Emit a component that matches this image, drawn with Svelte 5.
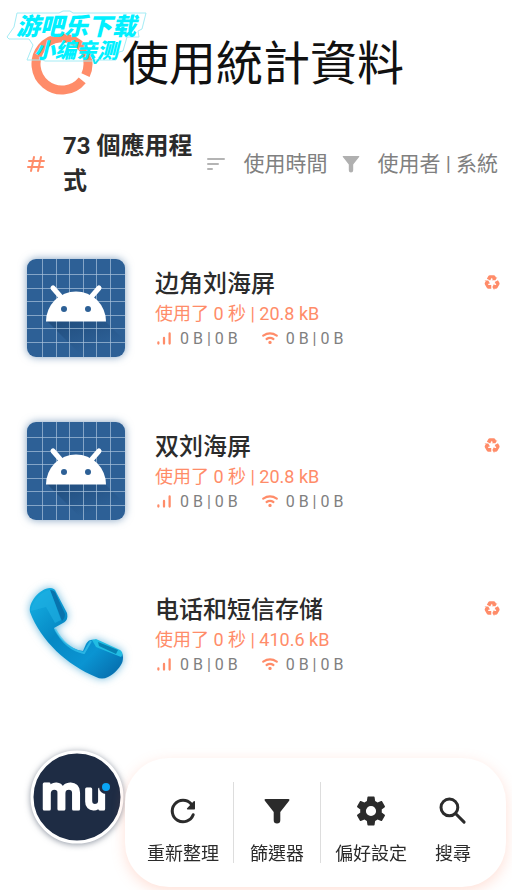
<script lang="ts">
	interface App {
		id: number;
		icon: 'android' | 'phone' | 'mu';
		name?: string;
		size?: string;
	}

	const apps: App[] = [
		{ id: 1, icon: 'android', name: '边角刘海屏', size: '20.8 kB' },
		{ id: 2, icon: 'android', name: '双刘海屏', size: '20.8 kB' },
		{ id: 3, icon: 'phone', name: '电话和短信存储', size: '410.6 kB' },
		{ id: 4, icon: 'mu' }
	];

	const gridLines = [15, 29, 42, 56, 69, 83];
</script>

{#snippet funnel()}
	<svg viewBox="0 0 24 24" fill="currentColor">
		<path d="M4.4 4h15.2c.7 0 .9.6.5 1.1L14.2 12.6v5.6a2.2 2.2 0 0 1-4.4 0v-5.6L3.9 5.1C3.5 4.6 3.7 4 4.4 4z" />
	</svg>
{/snippet}

{#snippet appIcon(icon: string)}
	{#if icon === 'android'}
		<svg class="app-icon android" viewBox="0 0 98 98">
			<defs>
				<linearGradient id="shade" x1="0" y1="0" x2="0.7" y2="1">
					<stop offset="0" stop-color="#173f6b" stop-opacity="0.6" />
					<stop offset="0.8" stop-color="#173f6b" stop-opacity="0" />
				</linearGradient>
			</defs>
			<rect width="98" height="98" rx="9" fill="#2d6096" />
			<path d="M20 62h58l20 20v16H56z" fill="url(#shade)" />
			{#each gridLines as n}
				<path d="M{n}.5 0v98M0 {n}.5h98" stroke="#a9c3dc" stroke-opacity="0.7" />
			{/each}
			<path d="M26 29l7 8M72 29l-7 8" stroke="#fff" stroke-width="5" stroke-linecap="round" />
			<path d="M19 62.5a30 30 0 0 1 60 0z" fill="#fff" />
			<circle cx="37" cy="50" r="3" fill="#2d6096" />
			<circle cx="61" cy="50" r="3" fill="#2d6096" />
		</svg>
	{:else if icon === 'phone'}
		<svg class="app-icon phone" viewBox="0 0 98 98">
			<defs>
				<linearGradient id="body" x1="0" y1="0" x2="1" y2="1">
					<stop offset="0" stop-color="#16b4e6" />
					<stop offset="0.4" stop-color="#0688c4" />
					<stop offset="0.7" stop-color="#0a94d2" />
					<stop offset="1" stop-color="#0566a6" />
				</linearGradient>
			</defs>
			<path
				d="M8 12C12 7 18 3 23 3c3 0 5 1 6 4l11 21c1 5 0 8-4 10l-9 5c4 8 11 17 24 22l5 1 3-7c2-4 5-5 9-4l25 11c3 2 4 7 2 12-3 6-9 12-14 14-4 2-8 2-12 0C40 80 14 56 3 27c-1-6 2-11 5-15z"
				fill="url(#body)"
			/>
			<path d="M23 5c3 0 5 1 6 4l9 20c0 3-1 5-3 7z" fill="#0873ad" />
			<path d="M23 5l11 30-6 3-9-16L4 26C5 17 14 6 23 5z" fill="#20b0e2" opacity="0.6" />
			<path d="M65 55l4-1 24 11c3 2 3 5 1 7L69 62z" fill="#21bde3" />
			<path d="M71 57l20 8-2 4-17-8z" fill="#0782b3" />
			<path d="M28 44c8 15 19 22 29 24l7-12" fill="none" stroke="#37c4ee" stroke-opacity="0.7" stroke-width="2" stroke-linejoin="round" />
		</svg>
	{:else}
		<svg class="app-icon mu" viewBox="0 0 98 98">
			<circle cx="50" cy="49" r="45" fill="#1e2c44" stroke="#fff" stroke-width="3" />
			<g class="mu-text">
				<text x="14" y="61" font-size="46">m</text>
				<text x="57" y="61" font-size="37">u</text>
			</g>
			<circle cx="79" cy="39" r="7" fill="#1e2c44" />
			<circle cx="79" cy="39" r="4" fill="#0aa5f5" />
		</svg>
	{/if}
{/snippet}

<div class="watermark">
	<svg viewBox="0 0 150 64" fill="none" stroke="#a4ecf5">
		<path d="M17 13h42l4-2h7l3 2h73l-4 16-4 2 1 6h-12l-4 14-4 1-3 8H94l-2 1H45l-2-1H27l6-15-4-6H9l-2-2 7-10z" />
		<path d="M92 54l3 10 4-5" stroke="#12e6f5" stroke-width="2" />
	</svg>
	<span class="line-1">游吧乐下载</span>
	<span class="line-2">小编亲测</span>
</div>

<header>
	<svg class="logo" viewBox="0 0 62 62">
		<circle
			cx="31"
			cy="31"
			r="26"
			fill="none"
			stroke="#ff8c69"
			stroke-width="9"
			pathLength="360"
			stroke-dasharray="346 14"
			transform="rotate(39 31 31)"
		/>
	</svg>
	<h1>使用統計資料</h1>
</header>

<div class="summary">
	<svg class="hash" viewBox="0 0 18 18" fill="none" stroke="#ff8c69" stroke-width="2" stroke-linecap="round">
		<path d="M7 2L4 16M14 2l-3 14M2 6h15M1 12h15" />
	</svg>
	<strong>73 個應用程式</strong>
	<button class="chip">
		<svg class="sort" viewBox="0 0 20 14" fill="none" stroke="#b4b4b4" stroke-width="2" stroke-linecap="round">
			<path d="M2 2h16M2 7h10M2 12h4" />
		</svg>
		使用時間
	</button>
	<button class="chip filter">
		{@render funnel()}
		使用者 | 系統
	</button>
</div>

<ul>
	{#each apps as app (app.id)}
		<li>
			{@render appIcon(app.icon)}
			{#if app.name}
				<div class="details">
					<h2>{app.name}</h2>
					<p class="usage">使用了 0 秒 | {app.size}</p>
					<p class="network">
						<svg viewBox="0 0 16 16" fill="none" stroke="#ff8c69" stroke-width="2" stroke-linecap="round">
							<path d="M3 12v-1M8 12V7M13 12V3" />
						</svg>
						<span>0 B | 0 B</span>
						<svg class="wifi" viewBox="0 0 16 16" fill="none" stroke="#ff8c69" stroke-width="2" stroke-linecap="round">
							<path d="M2 5q6-4 12 0M5 8q3-2 6 0" />
							<circle cx="8" cy="11" r="1" fill="#ff8c69" stroke-width="1" />
						</svg>
						<span>0 B | 0 B</span>
					</p>
				</div>
				<svg class="recycle" viewBox="0 0 24 24" fill="#ff8c69">
					<path
						d="M21.82 15.42l-2.5 4.33c-.49.86-1.4 1.31-2.32 1.25h-2v2l-2.5-4.5L15 14v2h2.82l-2.22-3.85 4.33-2.5 1.8 3.12c.52.77.59 1.8.09 2.65M9.21 3.06h5c.98 0 1.83.57 2.24 1.39l1 1.74 1.73-1-2.64 4.41-5.15.09 1.73-1-1.41-2.45-2.21 3.85-4.34-2.5 1.8-3.12c.41-.83 1.26-1.41 2.25-1.41M5.05 19.76l-2.5-4.33c-.49-.85-.42-1.87.09-2.64l1-1.73-1.73-1 5.14.08 2.65 4.42-1.73-1L6.56 16H11v5H7.4c-.93.07-1.85-.39-2.35-1.24z"
					/>
				</svg>
			{/if}
		</li>
	{/each}
</ul>

<nav>
	<button>
		<svg viewBox="0 0 24 24" fill="none" stroke="currentColor" stroke-width="2" stroke-linecap="round">
			<path d="M18.8 14.5A7.2 7.2 0 1 1 17.5 7.3" />
			<path d="M19.5 5.8v4.7h-4.4z" fill="currentColor" stroke-width="1" stroke-linejoin="round" />
		</svg>
		重新整理
	</button>
	<button class="divided">
		{@render funnel()}
		篩選器
	</button>
	<button>
		<svg viewBox="0 0 24 24" fill="currentColor">
			<path
				d="M19.14 12.94c.04-.3.06-.61.06-.94 0-.32-.02-.64-.07-.94l2.03-1.58c.18-.14.23-.41.12-.61l-1.92-3.32c-.12-.22-.37-.29-.59-.22l-2.39.96c-.5-.38-1.03-.7-1.62-.94l-.36-2.54c-.04-.24-.24-.41-.48-.41h-3.84c-.24 0-.43.17-.47.41l-.36 2.54c-.59.24-1.13.57-1.62.94l-2.39-.96c-.22-.08-.47 0-.59.22L2.74 8.87c-.12.21-.08.47.12.61l2.03 1.58c-.05.3-.09.63-.09.94s.02.64.07.94l-2.03 1.58c-.18.14-.23.41-.12.61l1.92 3.32c.12.22.37.29.59.22l2.39-.96c.5.38 1.03.7 1.62.94l.36 2.54c.05.24.24.41.48.41h3.84c.24 0 .44-.17.47-.41l.36-2.54c.59-.24 1.13-.56 1.62-.94l2.39.96c.22.08.47 0 .59-.22l1.92-3.32c.12-.22.07-.47-.12-.61l-2.01-1.58zM12 15.4a3.4 3.4 0 1 1 0-6.8 3.4 3.4 0 0 1 0 6.8z"
			/>
		</svg>
		偏好設定
	</button>
	<button>
		<svg viewBox="0 0 24 24" fill="none" stroke="currentColor" stroke-width="2" stroke-linecap="round">
			<circle cx="9.6" cy="9.6" r="5.6" />
			<path d="M14 14l5.4 5.4" />
		</svg>
		搜尋
	</button>
</nav>

<style>
	:global(body) {
		margin: 0;
		background: #fff;
		color: #2b2b2b;
		font-family: Roboto, 'Noto Sans CJK TC', sans-serif;
	}

	h1,
	h2,
	p,
	ul {
		margin: 0;
		padding: 0;
	}

	svg {
		flex-shrink: 0;
	}

	button {
		border: none;
		background: none;
		padding: 0;
		font: inherit;
		color: inherit;
		white-space: nowrap;
	}

	.watermark {
		position: absolute;
		top: 0;
		left: 0;
		width: 150px;
		color: #00f0ff;
		font-family: 'Noto Sans CJK SC', sans-serif;
		font-weight: 900;
		font-style: italic;
		white-space: nowrap;
	}

	.watermark svg {
		display: block;
	}

	.line-1 {
		position: absolute;
		top: 13px;
		left: 16px;
		font-size: 24px;
		line-height: 24px;
	}

	.line-2 {
		position: absolute;
		top: 39px;
		left: 34px;
		font-size: 21px;
		line-height: 21px;
	}

	header {
		display: flex;
		align-items: center;
		gap: 29px;
		padding: 30px 31px 0;
	}

	.logo {
		width: 62px;
	}

	h1 {
		font-size: 47px;
		font-weight: 400;
		line-height: 68px;
		color: #111;
		white-space: nowrap;
	}

	.summary {
		display: flex;
		align-items: center;
		padding: 31px 14px 0 27px;
	}

	.hash {
		width: 18px;
		margin-right: 18px;
	}

	strong {
		flex: 1;
		font-size: 24px;
		line-height: 35px;
	}

	.chip {
		display: flex;
		align-items: center;
		gap: 17px;
		font-size: 21px;
		font-weight: 400;
		line-height: 28px;
		color: #808080;
	}

	.sort {
		width: 20px;
	}

	.filter {
		gap: 14px;
		margin-left: 12px;
	}

	.filter svg {
		width: 24px;
		color: #b0b0b0;
	}

	ul {
		margin-top: 27px;
		list-style: none;
	}

	li {
		display: flex;
		align-items: center;
		gap: 30px;
		height: 163px;
		padding: 0 11px 0 27px;
	}

	.app-icon {
		width: 98px;
		overflow: visible;
	}

	.android {
		filter: drop-shadow(0 0 4px #2d609699);
	}

	.phone {
		filter: drop-shadow(0 0 4px #0688c499);
	}

	.mu {
		filter: drop-shadow(0 1px 3px #1e2c4480);
	}

	.mu-text {
		fill: #fff;
		stroke: #fff;
		stroke-width: 3;
		stroke-linejoin: round;
		font-family: Inter, sans-serif;
		font-weight: 500;
	}

	.details {
		flex: 1;
		padding-top: 2px;
	}

	h2 {
		font-family: Roboto, 'Noto Sans CJK SC', sans-serif;
		font-size: 24px;
		font-weight: 500;
		line-height: 34px;
	}

	.usage {
		font-size: 18px;
		font-weight: 400;
		line-height: 26px;
		color: #ff8c69;
	}

	.network {
		display: flex;
		align-items: center;
		gap: 7px;
		font-size: 16px;
		font-weight: 400;
		line-height: 24px;
		color: #808080;
	}

	.network svg {
		width: 18px;
	}

	.wifi {
		margin-left: 16px;
	}

	.recycle {
		width: 18px;
		align-self: flex-start;
		margin-top: 47px;
	}

	nav {
		position: fixed;
		right: 6px;
		bottom: 3px;
		display: flex;
		padding: 24px 21px 24px 8px;
		border-radius: 44px;
		background: #fff;
		box-shadow: 0 4px 14px #ff8c6944;
	}

	nav button {
		display: flex;
		flex-direction: column;
		align-items: center;
		gap: 16px;
		padding: 11px 14px 0;
		font-size: 18px;
		font-weight: 400;
		line-height: 18px;
	}

	nav svg {
		width: 36px;
	}

	nav .divided {
		padding: 11px 16px 0;
		border: solid #ddd;
		border-width: 0 1px;
	}
</style>
